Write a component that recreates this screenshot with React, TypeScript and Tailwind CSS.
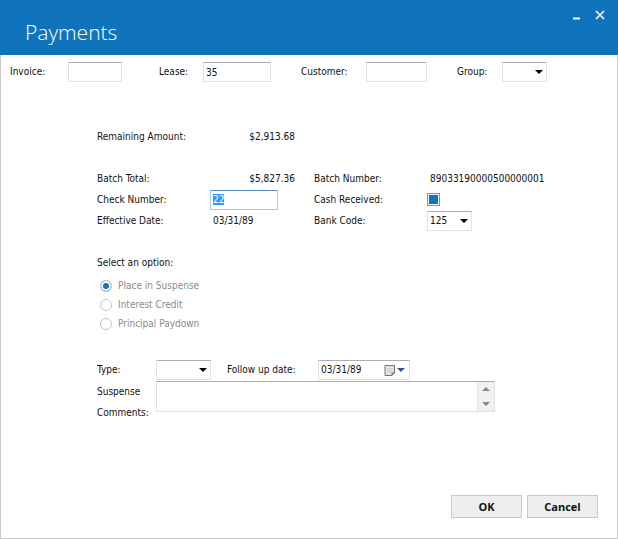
import { useEffect, useRef, type ReactNode } from "react";

const field =
  "h-5 rounded-[1px] border border-[#dfe2ea] border-t-[#abadb3] bg-white px-[2px] text-[10px] leading-[14px] outline-none";

function DownArrow({ className }: { className: string }) {
  return (
    <svg viewBox="0 0 8 4" className={`pointer-events-none h-1 w-2 ${className}`} fill="currentColor" aria-hidden="true">
      <path d="M0 0H8L4 4Z" />
    </svg>
  );
}

function Dropdown({ id, className, children }: { id: string; className: string; children: ReactNode }) {
  return (
    <div className={`relative h-5 ${className}`}>
      <select id={id} className={`${field} block w-full appearance-none`}>
        {children}
      </select>
      <DownArrow className="absolute top-2 right-1 text-black" />
    </div>
  );
}

const options = ["Place in Suspense", "Interest Credit", "Principal Paydown"];

export default function App() {
  const checkNumber = useRef<HTMLInputElement>(null);

  useEffect(() => {
    checkNumber.current?.focus();
    checkNumber.current?.select();
  }, []);

  return (
    <div className="flex min-h-screen flex-col bg-white font-['DejaVu_Sans_Condensed',Roboto,Arial,sans-serif] text-[10px] leading-[14px] text-[#111]">
      <header className="flex h-[55px] items-start justify-between bg-[#1074bc] pr-[10px] pl-[25px] text-white">
        <h1 className="pt-4 font-['Open_Sans',sans-serif] text-[21px] leading-8 font-light">Payments</h1>
        <div className="flex gap-2 pt-2">
          <button type="button" aria-label="Minimize" className="h-4 w-4">
            <svg viewBox="0 0 16 16" className="h-4 w-4">
              <path d="M5 10.5H12" stroke="white" strokeWidth="2" />
            </svg>
          </button>
          <button type="button" aria-label="Close" className="h-4 w-4">
            <svg viewBox="0 0 16 16" className="h-4 w-4">
              <path d="M4 3L12 11M12 3L4 11" stroke="white" strokeWidth="1.6" />
            </svg>
          </button>
        </div>
      </header>

      <form className="flex flex-1 flex-col border border-t-0 border-[#c8c8c8]" onSubmit={(e) => e.preventDefault()}>
        <div className="grid grid-cols-[58px_91px_44px_98px_65px_91px_45px_45px] items-center pt-[7px] pl-[9px]">
          <label htmlFor="invoice">Invoice:</label>
          <input id="invoice" className={`${field} w-[54px]`} />
          <label htmlFor="lease">Lease:</label>
          <input id="lease" defaultValue="35" className={`${field} w-[68px]`} />
          <label htmlFor="customer">Customer:</label>
          <input id="customer" className={`${field} w-[61px]`} />
          <label htmlFor="group">Group:</label>
          <Dropdown id="group" className="w-[45px]">
            <option></option>
          </Dropdown>
        </div>

        <div className="pt-11 pl-24">
          <div className="grid auto-rows-[21px] grid-cols-[113px_104px_113px_1fr] items-center">
            <span>Remaining Amount:</span>
            <span className="col-span-3 w-[85px] text-right">$2,913.68</span>
            <span className="col-span-4" />
            <span>Batch Total:</span>
            <span className="w-[85px] text-right">$5,827.36</span>
            <span>Batch Number:</span>
            <span className="pl-[3px]">89033190000500000001</span>
            <label htmlFor="check">Check Number:</label>
            <input
              id="check"
              ref={checkNumber}
              defaultValue="22"
              className="h-5 w-[68px] rounded-[1px] border border-[#a9cbe6] border-t-[#5a93c4] px-[2px] leading-[14px] outline-none selection:bg-[#3399ff] selection:text-white"
            />
            <label htmlFor="cash">Cash Received:</label>
            <input
              id="cash"
              type="checkbox"
              defaultChecked
              className="h-[13px] w-[13px] appearance-none border border-[#8e8f8f] bg-[#1074bc] shadow-[inset_0_0_0_1px_#f4f4f4]"
            />
            <span>Effective Date:</span>
            <span className="pl-[3px]">03/31/89</span>
            <label htmlFor="bank">Bank Code:</label>
            <Dropdown id="bank" className="w-[45px]">
              <option>125</option>
            </Dropdown>
          </div>

          <fieldset className="pt-[25px]">
            <legend className="float-left mb-[6px] w-full">Select an option:</legend>
            {options.map((name, i) => (
              <label key={name} className="clear-both flex h-[19px] items-center gap-[6px] pl-[3px] text-[#8b8b8b]">
                <input
                  type="radio"
                  name="option"
                  defaultChecked={i === 0}
                  disabled
                  className="h-3 w-3 appearance-none rounded-full border border-[#c4c4c4] bg-white checked:bg-[#1074bc] checked:shadow-[inset_0_0_0_2px_white]"
                />
                {name}
              </label>
            ))}
          </fieldset>

          <div className="grid grid-cols-[59px_1fr] items-start gap-y-px pt-[27px]">
            <label htmlFor="type" className="leading-5">Type:</label>
            <div className="flex items-center">
              <Dropdown id="type" className="w-[55px]">
                <option></option>
              </Dropdown>
              <label htmlFor="follow" className="w-[107px] pl-4">Follow up date:</label>
              <div className={`${field} flex w-[92px] items-center`}>
                <input id="follow" defaultValue="03/31/89" className="w-[63px] outline-none" />
                <button type="button" aria-label="Open calendar" className="flex items-center gap-px text-[#36558f]">
                  <svg viewBox="0 0 12 13" className="h-[13px] w-3" fill="none">
                    <path d="M1 1.5H10.5V9L8 11.5H1Z" fill="#e4e6ea" stroke="#77716f" />
                    <path d="M3 4.5H9M3 6.5H9M3 8.5H8" stroke="#c3c7cf" />
                    <path d="M10.5 9H8V11.5" stroke="#77716f" />
                  </svg>
                  <DownArrow className="" />
                </button>
              </div>
            </div>
            <label htmlFor="comments" className="leading-[21px]">Suspense Comments:</label>
            <div className="flex h-[31px] w-[339px] border border-[#dfe2ea] border-t-[#abadb3]">
              <textarea id="comments" className="min-w-0 flex-1 resize-none overflow-hidden px-1 outline-none" />
              <div className="flex w-[17px] flex-col items-center justify-between border-l border-[#e2e2e2] bg-[#f0f0f0] py-[5px] text-[#868686]">
                <DownArrow className="rotate-180" />
                <DownArrow className="" />
              </div>
            </div>
          </div>
        </div>

        <div className="mt-auto flex justify-end gap-[5px] pr-[19px] pb-5 font-['Open_Sans',sans-serif] text-[11px] font-bold">
          <button type="submit" className="h-[23px] w-[71px] border border-[#c9c9c9] bg-[#eee]">OK</button>
          <button type="button" className="h-[23px] w-[71px] border border-[#c9c9c9] bg-[#eee]">Cancel</button>
        </div>
      </form>
    </div>
  );
}
